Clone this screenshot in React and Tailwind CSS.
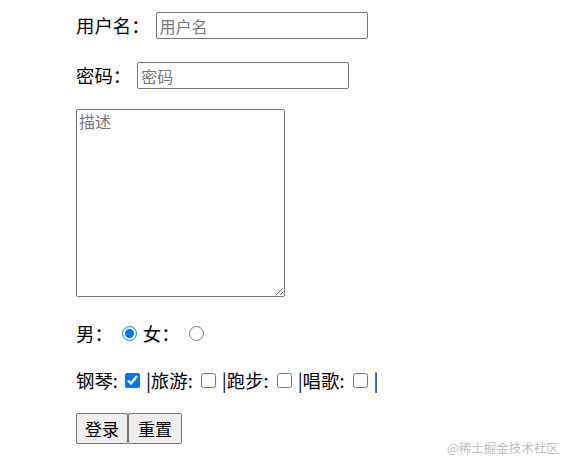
import React from 'react';

const font = { fontFamily: '"Noto Sans CJK SC", "Microsoft YaHei", sans-serif' };

function Check({ checked }) {
  return (
    <input
      type="checkbox"
      defaultChecked={checked}
      className="w-[15px] h-[15px] m-0 shrink-0"
    />
  );
}

export default function App() {
  return (
    <div
      className="relative w-[567px] h-[469px] bg-white text-black text-[18.4px] leading-none overflow-hidden"
      style={font}
    >
      <div className="flex flex-col pl-[76px]">
        {/* 用户名 */}
        <div className="mt-[12px] h-[27px] flex items-center">
          <span>用户名：</span>
          <input
            type="text"
            placeholder="用户名"
            className="ml-[6px] w-[212px] h-[27px] border border-[#767676] rounded-[2px] px-[3px] text-[16px] placeholder:text-[#757575] bg-white"
          />
        </div>

        {/* 密码 */}
        <div className="mt-[23px] h-[27px] flex items-center">
          <span>密码：</span>
          <input
            type="password"
            placeholder="密码"
            className="ml-[6px] w-[212px] h-[27px] border border-[#767676] rounded-[2px] px-[3px] text-[16px] placeholder:text-[#757575] bg-white"
          />
        </div>

        {/* 描述 */}
        <textarea
          placeholder="描述"
          className="mt-[20px] w-[209px] h-[188px] border border-[#767676] rounded-[2px] p-[2px] text-[16px] leading-[19px] placeholder:text-[#757575] resize bg-white"
        />

        {/* 性别 */}
        <div className="mt-[25px] h-[22px] flex items-center">
          <span>男：</span>
          <input type="radio" name="sex" defaultChecked className="w-[15px] h-[15px] m-0 ml-[9px] mr-[6px]" />
          <span>女：</span>
          <input type="radio" name="sex" className="w-[15px] h-[15px] m-0 ml-[9px]" />
        </div>

        {/* 爱好 */}
        <div className="mt-[25px] h-[22px] flex items-center text-black">
          <span>钢琴:</span>
          <span className="ml-[7px] mr-[6px] flex"><Check checked /></span>
          <span>|旅游:</span>
          <span className="ml-[8px] mr-[6px] flex"><Check /></span>
          <span>|跑步:</span>
          <span className="ml-[8px] mr-[6px] flex"><Check /></span>
          <span>|唱歌:</span>
          <span className="ml-[8px] mr-[6px] flex"><Check /></span>
          <span className="text-black">|</span>
        </div>

        {/* 按钮 */}
        <div className="mt-[22px] flex">
          <button className="h-[31px] px-[8px] border border-[#767676] rounded-[2px] bg-[#efefef] text-[17px]">
            登录
          </button>
          <button className="h-[31px] px-[9px] border border-[#767676] rounded-[2px] bg-[#efefef] text-[17px]">
            重置
          </button>
        </div>
      </div>

      <div className="absolute left-[447px] top-[442px] whitespace-nowrap text-[12.5px] text-[#bdbdbd]">
        @稀土掘金技术社区
      </div>
    </div>
  );
}
